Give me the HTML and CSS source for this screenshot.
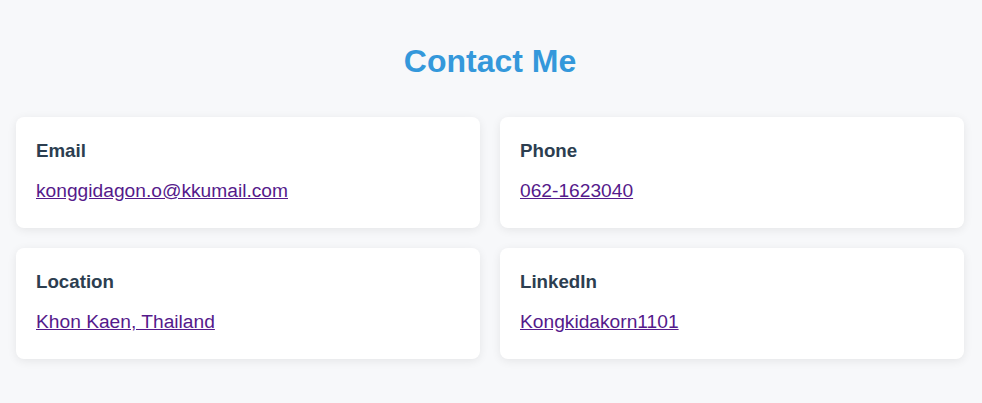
FILE: index.html
```html
<!DOCTYPE html>
<html lang="en">
<head>
<meta charset="utf-8">
<title>Contact Me</title>
<link rel="stylesheet" href="styles.css">
</head>
<body>
<section class="contact">
  <h2 class="contact-title">Contact Me</h2>
  <div class="contact-grid">
    <div class="contact-card">
      <h3 class="card-label">Email</h3>
      <p class="card-value"><a href="mailto:konggidagon.o@kkumail.com">konggidagon.o@kkumail.com</a></p>
    </div>
    <div class="contact-card">
      <h3 class="card-label">Phone</h3>
      <p class="card-value"><a href="tel:0621623040">062-1623040</a></p>
    </div>
    <div class="contact-card">
      <h3 class="card-label">Location</h3>
      <p class="card-value"><a href="#">Khon Kaen, Thailand</a></p>
    </div>
    <div class="contact-card">
      <h3 class="card-label">LinkedIn</h3>
      <p class="card-value"><a href="#">Kongkidakorn1101</a></p>
    </div>
  </div>
</section>
</body>
</html>
```

FILE: styles.css
```css
html, body {
  margin: 0;
  padding: 0;
  background: #f7f8fa;
  font-family: "Liberation Sans", Arial, sans-serif;
}

.contact {
  padding: 43px 18px 40px 16px;
}

.contact-title {
  margin: 0 0 37px;
  text-align: center;
  font-size: 32px;
  font-weight: 700;
  color: #3498db;
}

.contact-grid {
  display: grid;
  grid-template-columns: 1fr 1fr;
  gap: 20px;
}

.contact-card {
  background: #ffffff;
  border-radius: 8px;
  padding: 23px 20px 26px;
  box-shadow: 0 2px 10px rgba(0, 0, 0, 0.08);
}

.card-label {
  margin: 0 0 18px;
  font-size: 18.72px;
  font-weight: 700;
  color: #2c3e50;
}

.card-value {
  margin: 0;
  font-size: 19.2px;
  line-height: 22px;
}

.card-value a {
  color: #551a8b;
}
```
